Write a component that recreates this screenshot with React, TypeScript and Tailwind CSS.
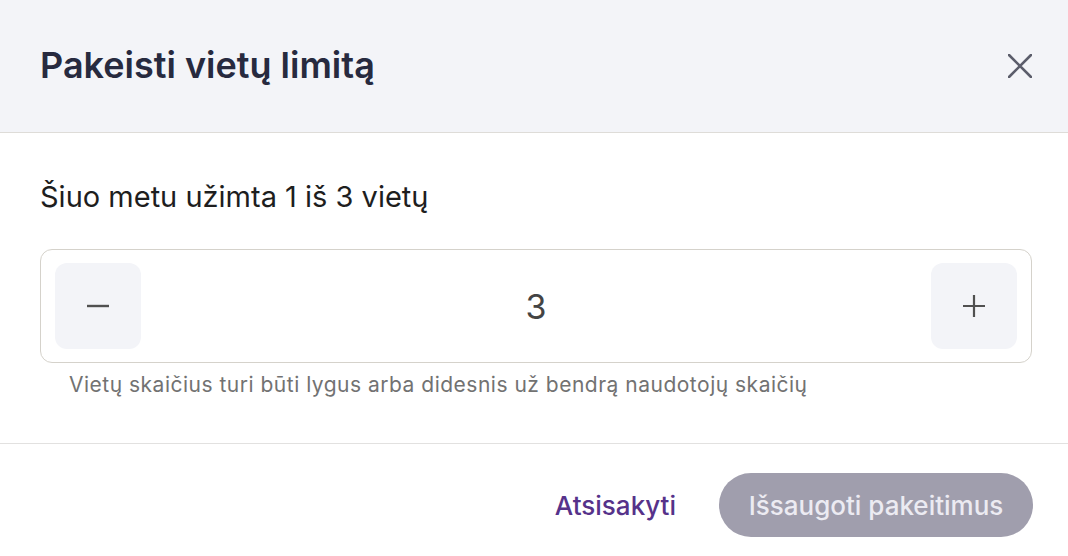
import React from "react";

export default function App() {
  return (
    <div
      className="w-[1068px] h-[556px] overflow-hidden bg-white"
      style={{ fontFamily: "Inter, 'Noto Sans', sans-serif" }}
    >
      <div className="h-[133px] bg-[#f3f4f8] border-b border-[#dedcd8] flex items-center justify-between pl-10 pr-[36px]">
        <h1 className="text-[36px] leading-[44px] font-semibold text-[#272a3f] -mt-[2px]">
          Pakeisti vietų limitą
        </h1>
        <button className="w-6 h-6 flex items-center justify-center">
          <svg width="24" height="24" viewBox="0 0 24 24" fill="none">
            <path d="M1 1L23 23M23 1L1 23" stroke="#5b5d6b" strokeWidth="2.6" strokeLinecap="round" />
          </svg>
        </button>
      </div>
      <div className="pl-10 pr-[36px] pt-[46px] pb-[44px] border-b border-[#e2e1e0]">
        <p className="text-[29px] leading-[36px] text-[#1e1e1e]">Šiuo metu užimta 1 iš 3 vietų</p>
        <div className="mt-[34px] h-[114px] border border-[#d5d2cb] rounded-[12px] p-[14px] flex items-center justify-between">
          <button className="w-[86px] h-[86px] rounded-[12px] bg-[#f3f4f8] flex items-center justify-center">
            <svg width="22" height="22" viewBox="0 0 22 22" fill="none">
              <path d="M0 11H22" stroke="#505050" strokeWidth="2.4" />
            </svg>
          </button>
          <span className="text-[34px] text-[#444444]">3</span>
          <button className="w-[86px] h-[86px] rounded-[12px] bg-[#f3f4f8] flex items-center justify-center">
            <svg width="22" height="22" viewBox="0 0 22 22" fill="none">
              <path d="M0 11H22M11 0V22" stroke="#505050" strokeWidth="2.2" />
            </svg>
          </button>
        </div>
        <p className="mt-[8px] pl-[29px] text-[21px] leading-[28px] text-[#727272] tracking-[0.5px]">
          Vietų skaičius turi būti lygus arba didesnis už bendrą naudotojų skaičių
        </p>
      </div>
      <div className="pt-[29px] pr-[35px] flex items-center justify-end gap-[43px]">
        <button className="text-[26px] font-medium text-[#56328a]">Atsisakyti</button>
        <button className="w-[314px] h-[64px] rounded-full bg-[#a09ead] text-[26px] font-medium text-[#ecebf2]">
          Išsaugoti pakeitimus
        </button>
      </div>
    </div>
  );
}
